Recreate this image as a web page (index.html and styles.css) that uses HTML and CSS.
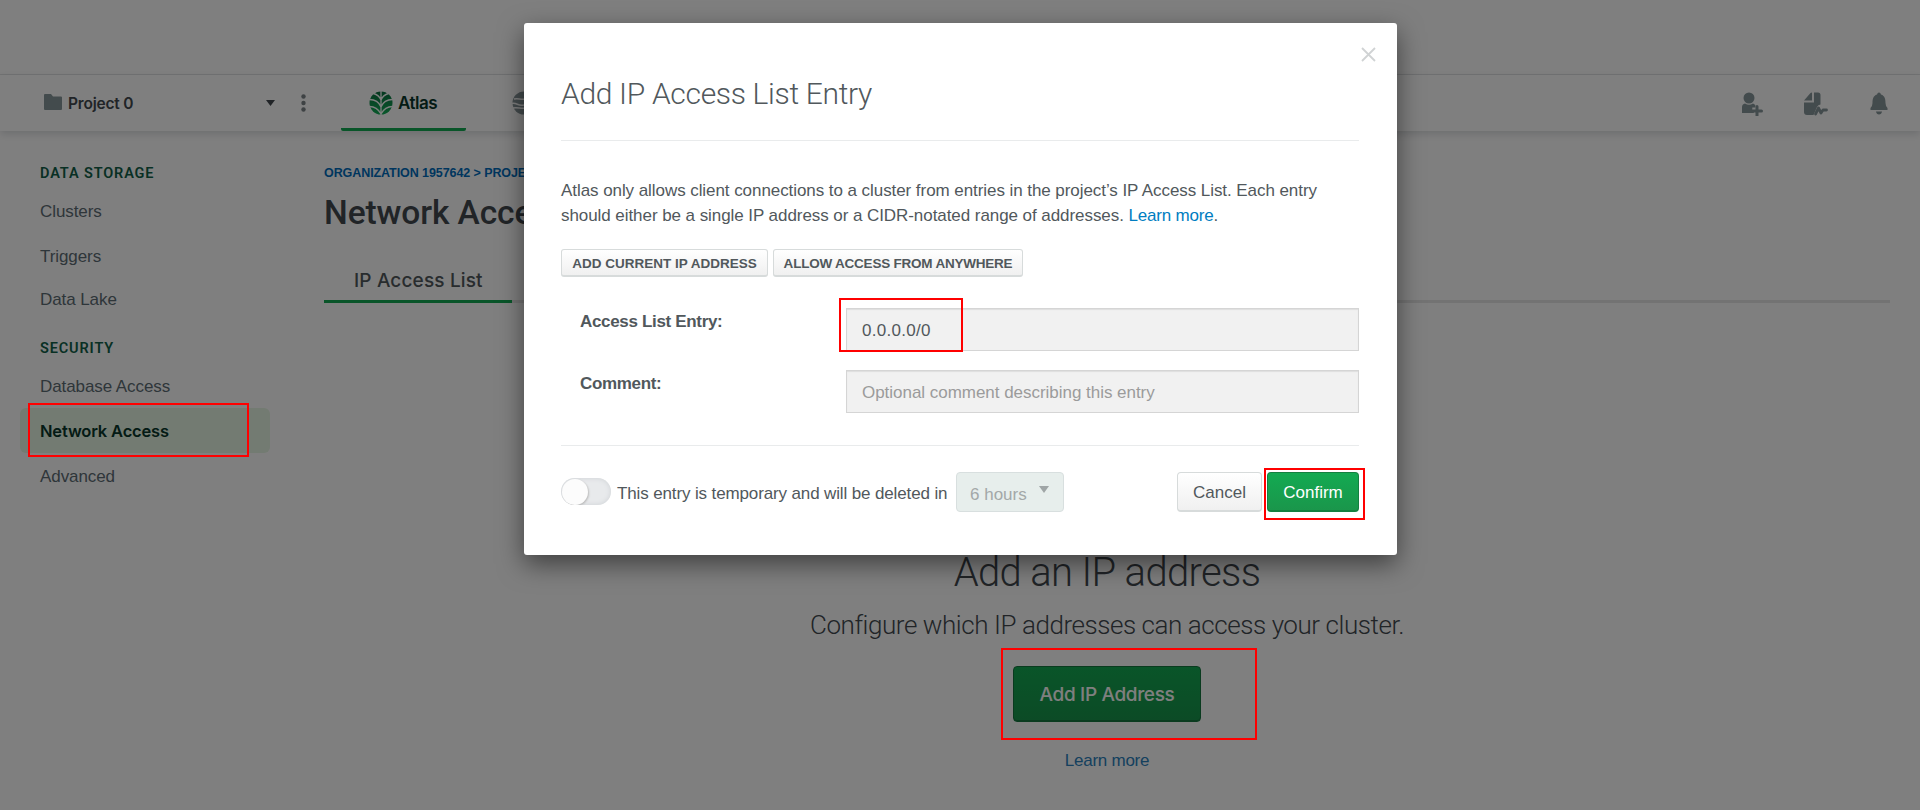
FILE: index.html
```
<!DOCTYPE html>
<html lang="en">
<head>
<meta charset="utf-8">
<title>Network Access</title>
<link rel="stylesheet" href="styles.css">
</head>
<body>
<div class="page">
  <div class="topbar"></div>
  <nav class="nav">
    <div class="project">
      <svg class="folder" width="18" height="16" viewBox="0 0 18 16"><path d="M1 0h6l2 2.500h8a1 1 0 0 1 1 1V15a1 1 0 0 1-1 1H1a1 1 0 0 1-1-1V1a1 1 0 0 1 1-1z" fill="#87969a"/></svg>
      <span class="project-name">Project 0</span>
      <svg class="caret" width="9" height="6" viewBox="0 0 9 6"><path d="M0 0h9L4.500 6z" fill="#42494f"/></svg>
      <svg class="dots" width="5" height="18" viewBox="0 0 5 18" fill="#7c8488"><circle cx="2.500" cy="2.500" r="2.200"/><circle cx="2.500" cy="9" r="2.200"/><circle cx="2.500" cy="15.500" r="2.200"/></svg>
    </div>
    <div class="tab tab-on">
      <svg width="24" height="24" viewBox="0 0 24 24"><defs><linearGradient id="leaf" x1="0" y1="0" x2="0" y2="1"><stop offset="0" stop-color="#0c7040"/><stop offset="1" stop-color="#13b058"/></linearGradient></defs><circle cx="12" cy="12" r="11.500" fill="url(#leaf)"/><g fill="none" stroke="#fff" stroke-width="1.300"><path d="M12 0v24M12 9Q10 4 4.500 2.500M12 9q2-5 7.500-6.500M12 16Q9 8.500 .5 8.500M12 16q3-7.500 11.500-7.500M12 23Q8 15.500 .5 15.500M12 23q4-7.500 11.500-7.500"/></g></svg>
      <span class="atlas">Atlas</span>
    </div>
    <div class="tab tab-off">
      <svg width="24" height="24" viewBox="0 0 24 24"><circle cx="12" cy="12" r="11.500" fill="#89979b"/><path d="M2 8c5-1 6 1 12 0M0 12.500c5-1 6 3 12 1.500M1 17c5-1 8 1 13 0" fill="none" stroke="#fff" stroke-width="1.500"/></svg>
    </div>
    <div class="tools">
      <svg width="22" height="24" viewBox="0 0 22 24" fill="#87969a"><circle cx="8" cy="6" r="5.500"/><path d="M1 21v-6q0-3 3-3.500 4 2.500 8 0 1.500.5 2.300 1.800v2.200h-3v3.800h1.500V21z"/><path d="M16 14.500v9M11.500 19h9" stroke="#87969a" stroke-width="3" stroke-linecap="round"/></svg>
      <svg width="26" height="24" viewBox="0 0 26 24" fill="#87969a"><path d="M9 .5v8H1l6.500-7.500q.5-.5 1.500-.5z"/><path d="M11 .5h4q2.500 0 2.500 2.500V12.500q-2.500.3-3.500 2.500l-3.500 8H4q-3 0-3-3V10.500h10z"/><path d="M12.500 22l3-6 2.500 5 2-3h3.500" fill="none" stroke="#87969a" stroke-width="2.800" stroke-linecap="round" stroke-linejoin="round"/></svg>
      <svg width="20" height="24" viewBox="0 0 20 24" fill="#87969a"><path d="M10 .5q1.500 0 2 2c4 1.300 4.500 5 4.500 8.500q0 3 2 5v2h-17v-2q2-2 2-5c0-3.500.5-7.200 4.500-8.500q.5-2 2-2z"/><path d="M7 19.500h6q-.5 3-3 3t-3-3z"/></svg>
    </div>
  </nav>
  <div class="body">
    <aside class="side">
      <h4>DATA STORAGE</h4>
      <a class="clusters">Clusters</a>
      <a>Triggers</a>
      <a class="lake">Data Lake</a>
      <h4 class="security">SECURITY</h4>
      <a class="low dba">Database Access</a>
      <a class="low on">Network Access</a>
      <a class="low">Advanced</a>
    </aside>
    <main class="main">
      <div class="crumb">ORGANIZATION 1957642 &gt; PROJECT 0</div>
      <h1>Network Access</h1>
      <div class="tabs"><div class="tabs-on">IP Access List</div></div>
      <section class="empty">
        <h2>Add an IP address</h2>
        <p>Configure which IP addresses can access your cluster.</p>
        <button class="big">Add IP Address</button>
        <a class="more">Learn more</a>
      </section>
    </main>
  </div>
</div>
<div class="overlay">
  <div class="modal">
    <svg class="close" width="15" height="15" viewBox="0 0 15 15"><path d="M1 1l13 13M14 1L1 14" stroke="#d0d3d4" stroke-width="1.800"/></svg>
    <h3>Add IP Access List Entry</h3>
    <div class="desc">Atlas only allows client connections to a cluster from entries in the project’s IP Access List. Each entry<br>should either be a single IP address or a CIDR-notated range of addresses. <a class="link">Learn more</a>.</div>
    <div class="quick"><button class="q1">ADD CURRENT IP ADDRESS</button><button class="q2">ALLOW ACCESS FROM ANYWHERE</button></div>
    <div class="row"><label>Access List Entry:</label><div class="field val">0.0.0.0/0</div></div>
    <div class="row"><label>Comment:</label><div class="field ph">Optional comment describing this entry</div></div>
    <div class="foot">
      <div class="toggle"><i></i></div>
      <div class="temp">This entry is temporary and will be deleted in</div>
      <div class="select"><span>6 hours</span><svg width="10" height="7" viewBox="0 0 10 7"><path d="M0 0h10L5 7z" fill="#9fa5a6"/></svg></div>
      <button class="cancel">Cancel</button>
      <button class="confirm">Confirm</button>
    </div>
  </div>
</div>
<i class="mark m1"></i><i class="mark m2"></i><i class="mark m3"></i><i class="mark m4"></i>
</body>
</html>
```
FILE: styles.css
```
* { box-sizing: border-box; }
body { margin: 0; width: 1920px; height: 810px; overflow: hidden; font: 17px/25px "Liberation Sans", Arial, sans-serif; color: #51585c; background: #fff; white-space: nowrap; }
h1, h2, h3, h4, p { margin: 0; font-weight: 400; }
button { font: inherit; padding: 0; color: inherit; white-space: nowrap; }
svg { display: block; flex: none; }
.page { height: 810px; }
.topbar { height: 75px; border-bottom: 1px solid #e4e6e7; }
.nav { display: flex; height: 56px; box-shadow: 0 3px 8px rgba(6, 22, 33, .15); }
.project { display: flex; align-items: center; width: 341px; padding: 0 35px 0 44px; }
.folder { margin-top: -2px; }
.project-name { margin-left: 6px; width: 200px; padding-top: 1px; font: 600 15.500px "Inter", sans-serif; letter-spacing: -.2px; color: #42494f; }
.dots { margin-left: 26px; }
.tab { display: flex; align-items: center; }
.tab-on { width: 125px; padding: 3px 0 0 28px; border-bottom: 3px solid #13aa52; border-radius: 2px; }
.atlas { margin-left: 5px; font: 600 17px "Inter", sans-serif; letter-spacing: -.5px; color: #09372b; }
.tab-off { padding-left: 46px; width: 400px; }
.tools { display: flex; align-items: center; gap: 40px; margin-left: auto; padding: 2px 31px 0 0; }
.body { display: flex; }
.side { width: 324px; padding: 31px 54px 0 20px; display: flex; flex-direction: column; }
.side h4, .side a { padding-left: 20px; height: 45px; line-height: 45px; color: #5d6c74; }
.side a { letter-spacing: -.08px; }
.side h4 { height: 24px; font: 600 14.500px/24px "Roboto", sans-serif; letter-spacing: .87px; color: #116149; }
.side .clusters { margin-top: 3px; }
.side .lake { height: 41px; line-height: 41px; }
.side .security { margin-top: 17px; }
.side .low { padding-top: 1px; }
.side .dba { margin-top: 2px; }
.side .on { background: #e6f6e4; border-radius: 6px; color: #09372b; font: 600 16.500px/45px "Inter", sans-serif; letter-spacing: -.17px; }
.main { width: 1566px; }
.crumb { margin-top: 30px; font: 700 12.500px/24px "Liberation Sans", sans-serif; letter-spacing: -.08px; color: #006cbc; }
.main h1 { margin-top: 7px; font: 500 33.500px/42px "Roboto", sans-serif; letter-spacing: -.1px; color: #42494f; }
.tabs { height: 56px; margin-top: 13px; border-bottom: 3px solid #e7e7e7; }
.tabs-on { width: 188px; height: 56px; border-bottom: 3px solid #13aa52; padding: 22px 0 0 30px; font: 500 19px/24px "Inter", sans-serif; letter-spacing: .15px; }
.empty { display: flex; flex-direction: column; align-items: center; margin-top: 245px; }
.empty h2 { font: 300 40px/50px "Roboto", sans-serif; letter-spacing: -.65px; color: #42494f; }
.empty p { margin-top: 10px; font: 300 26px/34px "Roboto", sans-serif; letter-spacing: -.44px; color: #42494f; }
.big { width: 188px; height: 56px; margin-top: 24px; border: 1px solid #14773f; border-radius: 4px; background: linear-gradient(#13aa52, #18964c); box-shadow: inset 0 -1px #14773f; color: #fff; font: 500 19px "Inter", sans-serif; letter-spacing: -.35px; }
.more { margin-top: 26px; letter-spacing: -.25px; color: #2b81bc; }
.overlay { position: absolute; inset: 0; background: rgba(0, 0, 0, .5); padding: 23px 0 0 524px; }
.modal { position: relative; width: 873px; height: 532px; padding: 45px 38px 0 37px; background: #fff; border-radius: 3px; box-shadow: 0 9px 26px rgba(0, 0, 0, .5); }
.close { position: absolute; right: 21px; top: 24px; }
.modal h3 { height: 73px; font: 300 30px/52px "Roboto", sans-serif; letter-spacing: -.32px; border-bottom: 1px solid #e9ebec; }
.desc { margin-top: 37px; height: 71px; letter-spacing: -.065px; }
.link { color: #007dc1; letter-spacing: -.2px; }
.quick { display: flex; gap: 5px; margin-bottom: 31px; }
.quick button { height: 28px; padding-top: 2px; border: 1px solid #d7dbdb; border-bottom-width: 2px; border-radius: 3px; background: linear-gradient(#fff, #f0f0f0); font-weight: 700; font-size: 13.500px; line-height: 22px; }
.q1 { width: 207px; }
.quick .q2 { width: 250px; letter-spacing: -.22px; }
.row { display: flex; height: 43px; margin-bottom: 19px; padding-left: 19px; }
.row label { width: 266px; padding-top: 1px; font-weight: 700; font-size: 17px; letter-spacing: -.33px; }
.field { width: 513px; border: 1px solid #d5d5d5; background: #f1f1f1; box-shadow: inset 0 1px 1px rgba(0, 0, 0, .08); padding: 9px 15px; }
.val { letter-spacing: .3px; }
.ph { color: #9b9b9b; letter-spacing: -.03px; }
.foot { display: flex; align-items: flex-start; margin-top: 32px; padding-top: 26px; border-top: 1px solid #e9ebec; }
.toggle { width: 50px; height: 27px; margin-top: 6px; padding: 1px; border-radius: 14px; background: #e8eaec; box-shadow: inset 0 0 4px 1px #d5d8db; overflow: hidden; }
.toggle i { display: block; width: 26px; height: 26px; border-radius: 50%; background: #fcfcfc; box-shadow: 1px 1px 2px #bbb; }
.temp { width: 339px; margin: 9px 0 0 6px; letter-spacing: -.13px; }
.select { display: flex; width: 108px; height: 40px; padding: 9px 14px 0 13px; background: #e7eeec; border: 1px solid #d8dfdf; border-radius: 4px; color: #a3a8a8; justify-content: space-between; }
.select svg { margin-top: 4px; }
.cancel, .confirm { height: 40px; padding-top: 1px; border-radius: 4px; }
.cancel { width: 85px; margin-left: 113px; border: 1px solid #d7dbdb; border-bottom-width: 2px; background: linear-gradient(#fff, #f0f0f0); }
.confirm { width: 92px; margin-left: 5px; border: 1px solid #148040; border-bottom-width: 2px; background: linear-gradient(#13aa52, #1a964b); color: #fff; }
.mark { position: absolute; border: 2px solid #f00; }
.m1 { left: 28px; top: 403px; width: 221px; height: 54px; }
.m2 { left: 839px; top: 298px; width: 124px; height: 54px; }
.m3 { left: 1264px; top: 468px; width: 101px; height: 52px; }
.m4 { left: 1001px; top: 648px; width: 256px; height: 92px; }
```
